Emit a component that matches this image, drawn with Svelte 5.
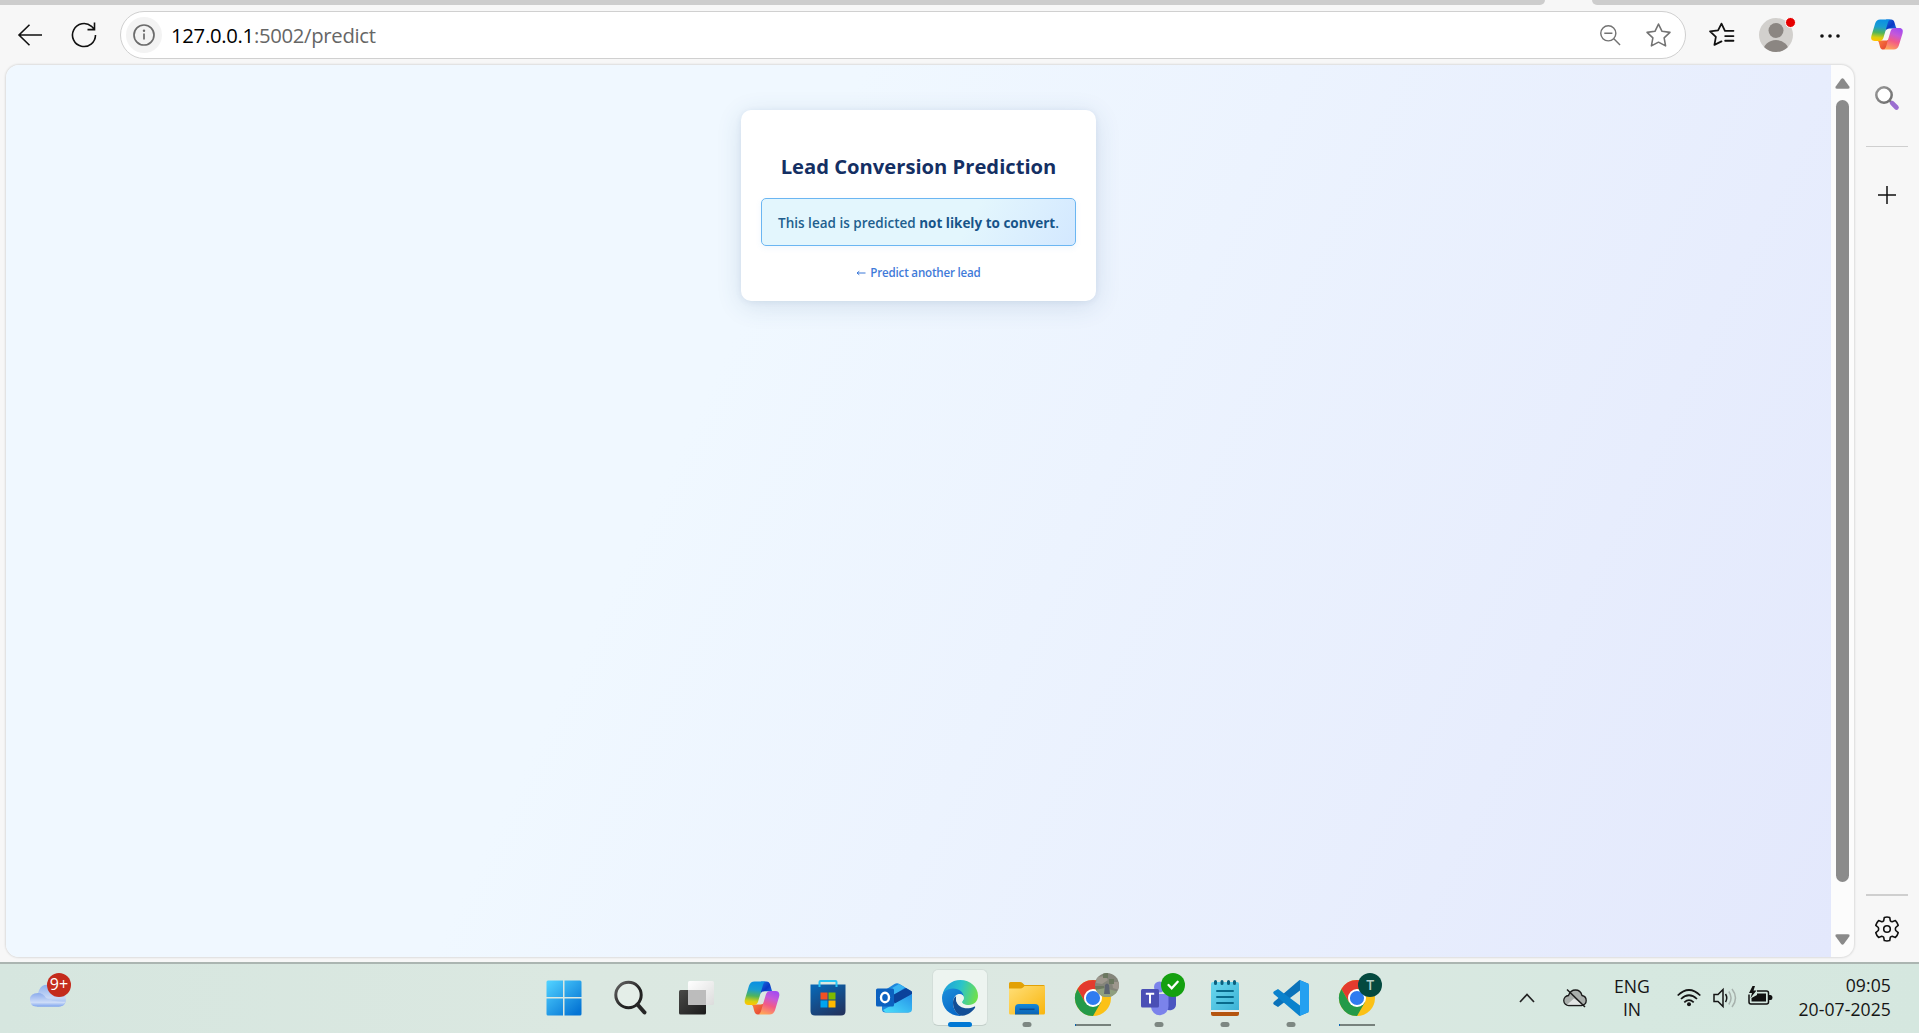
<script>
  const apps = [
    { id: 'start' },
    { id: 'search' },
    { id: 'tasks' },
    { id: 'copilot' },
    { id: 'store' },
    { id: 'outlook' },
    { id: 'edge', mark: 'active' },
    { id: 'files', mark: 'dot' },
    { id: 'chrome', mark: 'line', badge: 'photo' },
    { id: 'teams', mark: 'dot', badge: 'check' },
    { id: 'notepad', mark: 'dot' },
    { id: 'code', mark: 'dot' },
    { id: 'chrome', mark: 'line', badge: 'letter' }
  ];
</script>

{#snippet copilot(k)}
  <svg class="copilot" viewBox="0 0 36 34">
    <defs>
      <linearGradient id="ca{k}" x1=".5" y1="0" x2=".4" y2="1">
        <stop offset="0" stop-color="#0a8fe4" /><stop offset=".35" stop-color="#1b9ed0" />
        <stop offset=".62" stop-color="#4fb45c" /><stop offset=".85" stop-color="#d8cf10" /><stop offset="1" stop-color="#ffc400" />
      </linearGradient>
      <linearGradient id="cb{k}" x1=".7" y1="0" x2=".35" y2="1">
        <stop offset="0" stop-color="#a44cf0" /><stop offset=".3" stop-color="#c659d8" />
        <stop offset=".6" stop-color="#f25a87" /><stop offset="1" stop-color="#ffa458" />
      </linearGradient>
      <linearGradient id="cc{k}" x1="0" y1="0" x2="1" y2="1">
        <stop offset="0" stop-color="#1a6fe0" /><stop offset=".5" stop-color="#0a38c4" /><stop offset="1" stop-color="#1b7de6" />
      </linearGradient>
      <linearGradient id="cd{k}" x1="0" y1="0" x2="1" y2="1">
        <stop offset="0" stop-color="#ff8a3c" /><stop offset="1" stop-color="#e03a35" />
      </linearGradient>
    </defs>
    <path fill="url(#cc{k})" d="M17 .5h5.500c2 0 3 1.200 3.600 3l1.600 5.400c.3 1 .9 1.400 1.800 1.400h-8.500c-2.500 0-4 1-4.700 3z" />
    <path fill="url(#cd{k})" d="M8 23.500h8.500c2 0 3-.8 3.600-2.500L18 30c-.6 2-2 3.500-4 3.500-2.200 0-3.200-1.300-3.700-3.200l-1.200-4.500c-.3-1-.9-2-2.100-2.300z" />
    <path fill="url(#ca{k})" d="M10.500.5h12c-2 0-3 1.700-3.600 3.700l-4.700 16c-.8 2.500-2 3.800-4.500 3.800H4.500C1 24 0 21.500 1 18L5 4.800C5.900 2 7.800.5 10.500.5z" />
    <path fill="url(#cb{k})" d="M25.500 33.500h-12c2 0 3-1.700 3.600-3.700l4.700-16c.8-2.500 2-3.800 4.500-3.800h5.200c3.500 0 4.500 2.500 3.500 6l-4 13.200c-.9 2.800-2.800 4.300-5.500 4.300z" />
  </svg>
{/snippet}

{#snippet chrome()}
  <svg viewBox="0 0 36 36">
    <circle cx="18" cy="18" r="18" fill="#fbc116" />
    <path fill="#e33b2e" d="M2.410 9A18 18 0 0 1 33.590 9H18L10.200 22.500z" />
    <path fill="#249a48" d="M2.410 9A18 18 0 0 0 18 36L25.800 22.500 18 18l-7.800 4.500z" />
    <circle cx="18" cy="18" r="9" fill="#fff" />
    <circle cx="18" cy="18" r="7.100" fill="#2f7cf0" />
  </svg>
{/snippet}

{#snippet appIcon(id)}
  {#if id === 'start'}
    <svg viewBox="0 0 36 36">
      <defs><linearGradient id="win" gradientUnits="userSpaceOnUse" x1="2" y1="2" x2="30" y2="34"><stop offset="0" stop-color="#4fd0ff" /><stop offset="1" stop-color="#0474d4" /></linearGradient></defs>
      <path fill="url(#win)" d="M2 .5h15v16.500H.5V2Q.5.500 2 .5zM18.500.5H34q1.500 0 1.500 1.500v15h-17zM.5 18.500H17v17H2Q.5 35.500.5 34zM18.500 18.500h17V34q0 1.500-1.500 1.500H18.500z" />
    </svg>
  {:else if id === 'search'}
    <svg viewBox="0 0 36 36">
      <defs><linearGradient id="sg" x1="0" y1="0" x2="1" y2="1"><stop offset="0" stop-color="#666" /><stop offset=".6" stop-color="#222" /></linearGradient></defs>
      <circle cx="16.500" cy="15" r="12.700" fill="#fff" fill-opacity=".25" stroke="url(#sg)" stroke-width="3" />
      <path d="M25.500 24.500l7 8" stroke="#262626" stroke-width="4" stroke-linecap="round" />
    </svg>
  {:else if id === 'tasks'}
    <svg viewBox="0 0 36 36">
      <defs>
        <linearGradient id="tk" x1="0" y1="0" x2="1" y2="1"><stop offset="0" stop-color="#4a4a48" /><stop offset="1" stop-color="#1b1b1b" /></linearGradient>
        <linearGradient id="tw" x1="0" y1="0" x2="1" y2="1"><stop offset="0" stop-color="#fff" /><stop offset="1" stop-color="#dcdcdc" /></linearGradient>
      </defs>
      <rect x="1" y="10" width="27" height="24.500" rx="1.500" fill="url(#tk)" />
      <rect x="10" y="1" width="26" height="24" rx="1.500" fill="url(#tw)" />
      <path d="M10 10h18v15H11.500Q10 25 10 23.500z" fill="#bcbcbc" />
    </svg>
  {:else if id === 'copilot'}
    {@render copilot('task')}
  {:else if id === 'store'}
    <svg viewBox="0 0 36 36">
      <defs><linearGradient id="st" x1=".2" y1="0" x2=".8" y2="1"><stop offset="0" stop-color="#0866b4" /><stop offset="1" stop-color="#22335f" /></linearGradient></defs>
      <path d="M.5 4.500h35V31q0 4.500-4.500 4.500H5Q.5 35.500.5 31z" fill="url(#st)" />
      <path d="M9.500 7V2Q9.500 1 10.500 1h15q1 0 1 1v5" fill="none" stroke="#28c4f5" stroke-width="2" />
      <path d="M10.500 12.500h7v7h-7z" fill="#f25022" /><path d="M18.500 12.500h7v7h-7z" fill="#7fba00" />
      <path d="M10.500 20.500h7v7h-7z" fill="#00a4ef" /><path d="M18.500 20.500h7v7h-7z" fill="#ffb900" />
    </svg>
  {:else if id === 'outlook'}
    <svg viewBox="0 0 36 36">
      <defs><linearGradient id="ol" x1="0" y1="1" x2="1" y2="0"><stop offset="0" stop-color="#4be0fb" /><stop offset="1" stop-color="#2590e8" /></linearGradient></defs>
      <path d="M6 12L18.500 4Q21 2.500 23.500 4L35 11v18q0 3.500-3.500 3.500H9.500q-3.500 0-3.500-3.500z" fill="#1c86dc" />
      <path d="M11 11L23 4l6 3.500L14 18z" fill="#39b3f2" />
      <path d="M15 16L30 8l6 3.500v3L19 24z" fill="#0b429b" />
      <path d="M7 30L36 14v15q0 3.500-3.500 3.500H9.500z" fill="url(#ol)" />
      <rect x="0" y="8.500" width="18" height="18" rx="1.500" fill="#0c61c0" />
      <ellipse cx="9" cy="17.500" rx="4" ry="4.700" fill="none" stroke="#fff" stroke-width="2.400" />
    </svg>
  {:else if id === 'edge'}
    <svg viewBox="0 0 36 36">
      <defs>
        <linearGradient id="e1" x1="0" y1=".3" x2="1" y2=".5"><stop offset="0" stop-color="#1f9fdc" /><stop offset=".5" stop-color="#2bc4c9" /><stop offset="1" stop-color="#6fe04c" /></linearGradient>
        <linearGradient id="e2" x1="0" y1="0" x2=".6" y2="1"><stop offset="0" stop-color="#1c8edb" /><stop offset="1" stop-color="#0667c6" /></linearGradient>
      </defs>
      <path fill="url(#e1)" d="M.4 15.500C2 6 9.500 0 18.300 0 28.500 0 36 7.300 36 15.700c0 5.300-4 9.300-9.300 9.300-4.200 0-6.700-1.500-6.700-3 0-1 1.700-1.700 1.700-4.300 0-4-3.700-7.700-9.700-7.700C6.500 10 2 12.500.4 15.500z" />
      <path fill="url(#e2)" d="M0 18C0 12 5 8.500 11 8.500c6.500 0 10.700 4 10.700 8.500-1-2-2.500-3-4.500-3-3.400 0-6.200 4-6.200 9 0 6 3.500 11 9 12.800C8.500 37 0 28.500 0 18z" />
      <path fill="#124e96" d="M14.200 16C11.500 18 11 20 11 23c0 7 5 12.500 9.500 12.800C26 35 30.500 31.500 33 27.700c.5-.9-.2-1.400-1-.9C24 30.500 15.500 27 14.200 21c-.3-2-.2-3.500 0-5z" />
      <path fill="#edf4f0" d="M14.200 17.500c.8-2.200 2-3.300 3.600-3.300 2.400 0 4 1.700 4 3.800 0 2-1.800 3-1.800 4.200 0 1.700 2.700 3.100 7 3-5.800 2-12-.5-12.800-5.200z" />
    </svg>
  {:else if id === 'files'}
    <svg viewBox="0 0 36 36">
      <defs>
        <linearGradient id="fg" x1="0" y1="0" x2="1" y2="1"><stop offset="0" stop-color="#ffdf78" /><stop offset="1" stop-color="#f9b50d" /></linearGradient>
        <linearGradient id="fb" x1="0" y1="0" x2="0" y2="1"><stop offset="0" stop-color="#1488d8" /><stop offset="1" stop-color="#0b62b4" /></linearGradient>
      </defs>
      <path d="M0 3.500Q0 2 1.500 2H11q1.500 0 2.500 1l2 2H34.500Q36 5 36 6.500V20H0z" fill="#e2a106" />
      <path d="M0 8.500h11.500q1.500 0 2.500-1L15.500 6H36v27q0 1.500-1.500 1.500h-33Q0 34.500 0 33z" fill="url(#fg)" />
      <path d="M6 34.500V28q0-4 4-4h16q4 0 4 4v6.500z" fill="url(#fb)" />
      <path d="M10.500 29.300h15" stroke="#0a4b93" stroke-width="1.500" />
    </svg>
  {:else if id === 'chrome'}
    {@render chrome()}
  {:else if id === 'teams'}
    <svg viewBox="0 0 36 36">
      <circle cx="31" cy="11" r="4" fill="#4b53bc" /><circle cx="18.500" cy="7" r="5.500" fill="#7b83eb" />
      <path d="M24 14h11v10.500a6 6 0 0 1-11 3z" fill="#4b55c0" />
      <path d="M10 14h17.500v12a8.500 8.500 0 0 1-17.500 1z" fill="#7b83eb" />
      <rect x="0" y="9" width="18" height="18.500" rx="1.500" fill="#4a4fb5" />
      <path d="M4.800 13.800h8.400M9 13.800V23.500" stroke="#fff" stroke-width="2" />
    </svg>
  {:else if id === 'notepad'}
    <svg viewBox="0 0 36 36">
      <defs><linearGradient id="np" x1="0" y1="0" x2="1" y2="1"><stop offset="0" stop-color="#6bd8ef" /><stop offset="1" stop-color="#3cb2d6" /></linearGradient></defs>
      <path d="M4 29h28v5q0 2-2 2H6q-2 0-2-2z" fill="#b4540f" /><path d="M4 29h28v3H4z" fill="#efe9e4" />
      <path d="M6 2h24q2 0 2 2v26H4V4q0-2 2-2z" fill="url(#np)" />
      <path d="M8.500 1.500v2M15 1.500v2M21.500 1.500v2M27.500 1.500v2" stroke="#0b5f7e" stroke-width="3" stroke-linecap="round" />
      <path d="M10 11h16M10 17h16M10 23h16" stroke="#086a8c" stroke-width="2" stroke-linecap="round" />
    </svg>
  {:else if id === 'code'}
    <svg viewBox="0 0 36 36">
      <path d="M26.500 0L36 4 27 10.500 5 27 .8 24.500q-1.300-1.300 0-2.600z" fill="#0b72ba" />
      <path d="M26.500 36L36 32 27 25.500 5 9 .8 11.500q-1.300 1.300 0 2.600z" fill="#0b82cd" />
      <path d="M26.500 0L34.700 3.500Q36 4 36 5.500v25q0 1.500-1.300 2L26.500 36q.5-.5.500-2V2q0-1.500-.5-2z" fill="#25a0f0" />
    </svg>
  {/if}
{/snippet}

<div class="screen">
  <div class="tabs"><i class="tab-left"></i><i class="tab-right"></i></div>

  <header class="toolbar">
    <svg class="back" viewBox="0 0 24 22"><path d="M24 11H1M11.500 .8L1 11l10.500 10.200" /></svg>
    <svg class="reload" viewBox="0 0 26 26"><path d="M24.500 13A11.500 11.500 0 1 1 20.500 4.300L23.500 7.500M23.500 .5V7.600H16.500" /></svg>
    <div class="address">
      <span class="info"><svg viewBox="0 0 22 22"><circle cx="11" cy="11" r="10" /><path d="M11 9.500V15.500" /><circle class="pt" cx="11" cy="6.800" r="1.200" /></svg></span>
      <span class="url"><b>127.0.0.1</b>:5002/predict</span>
      <svg class="zoom" viewBox="0 0 22 22"><circle cx="8.700" cy="8.700" r="7.900" /><path d="M4.500 8.700h8.500M14.500 14.500L21 21" /></svg>
      <svg class="star" viewBox="0 0 24 24"><path d="M12 1l3.400 7 7.600 1-5.600 5.300L18.800 22 12 18.400 5.200 22l1.400-7.700L1 9l7.600-1z" /></svg>
    </div>
    <svg class="favs" viewBox="0 0 24 24"><path d="M23.500 8.500H15.300L12 1.500 8.700 8 1 9l5.600 5.300L5.200 22l6.800-3.400M15.500 13.500h8M15.500 18h8" /></svg>
    <div class="profile">
      <svg viewBox="0 0 34 34"><defs><clipPath id="pc"><circle cx="17" cy="17" r="17" /></clipPath></defs><circle cx="17" cy="17" r="17" fill="#d2d0cd" /><g clip-path="url(#pc)" fill="#8b8682"><circle cx="17" cy="12.500" r="7.500" /><ellipse cx="17" cy="34" rx="13" ry="12" /></g></svg>
      <i></i>
    </div>
    <svg class="more" viewBox="0 0 20 4"><circle cx="2" cy="2" r="1.800" /><circle cx="10" cy="2" r="1.800" /><circle cx="18" cy="2" r="1.800" /></svg>
    <div class="bar-copilot">{@render copilot('bar')}</div>
  </header>

  <div class="middle">
    <div class="frame">
      <main class="page">
        <section class="card">
          <h1>Lead Conversion Prediction</h1>
          <p class="result"><span class="lead">This lead is predicted</span> <strong>not likely to convert</strong>.</p>
          <a class="again" href="#again"><svg viewBox="0 0 10 6"><path d="M9.500 3H1M3.300 1.200L1 3l2.300 1.800" /></svg>Predict another lead</a>
        </section>
      </main>
      <div class="scroll">
        <svg viewBox="0 0 15 11"><path d="M6 1.200Q7.500-.8 9 1.200L14.300 8.500Q15.200 10.700 13 10.800H2Q-.2 10.700.7 8.500z" /></svg>
        <i></i>
        <svg class="down" viewBox="0 0 15 11"><path d="M6 1.200Q7.500-.8 9 1.200L14.300 8.500Q15.200 10.700 13 10.800H2Q-.2 10.700.7 8.500z" /></svg>
      </div>
    </div>
    <aside class="side">
      <svg class="find" viewBox="0 0 24 24"><defs><linearGradient id="fd" x1="0" y1="0" x2="1" y2="1"><stop offset="0" stop-color="#9b9b9b" /><stop offset="1" stop-color="#6a6a6a" /></linearGradient></defs><circle cx="9" cy="9" r="7.700" fill="#fff" stroke="url(#fd)" stroke-width="2.500" /><path d="M14 14l3 3" stroke="#777" stroke-width="2.500" /><path d="M17.200 17.200l4.300 4.300" stroke="#9b6fd0" stroke-width="4.600" stroke-linecap="round" /></svg>
      <i class="rule"></i>
      <svg class="plus" viewBox="0 0 18 18"><path d="M9 0v18M0 9h18" /></svg>
      <i class="rule bottom"></i>
      <svg class="gear" viewBox="0 0 26 26"><path d="M10.300 1.400Q13 .6 15.700 1.400L16.300 4.700Q17 5.600 18.200 5.700L21.400 4.600Q23.500 6.600 24.200 9.300L21.700 11.500Q21 13 21.700 14.500L24.200 16.700Q23.500 19.400 21.400 21.400L18.200 20.300Q17 20.400 16.300 21.300L15.700 24.600Q13 25.400 10.300 24.600L9.700 21.300Q9 20.400 7.800 20.300L4.600 21.400Q2.500 19.400 1.800 16.700L4.300 14.500Q5 13 4.300 11.500L1.800 9.300Q2.500 6.600 4.600 4.600L7.800 5.700Q9 5.600 9.700 4.700z" /><circle cx="13" cy="13" r="3.300" /></svg>
    </aside>
  </div>

  <footer class="taskbar">
    <div class="weather">
      <svg viewBox="0 0 36 23"><defs><linearGradient id="cl" x1="0" y1="0" x2="0" y2="1"><stop offset="0" stop-color="#8fb2ee" /><stop offset=".6" stop-color="#c9d9f6" /><stop offset="1" stop-color="#86aaf0" /></linearGradient><linearGradient id="cl2" x1="0" y1="0" x2="0" y2="1"><stop offset="0" stop-color="#8cacec" /><stop offset=".7" stop-color="#cddcf8" /><stop offset="1" stop-color="#80a5ee" /></linearGradient></defs><path d="M7 22.500Q6 .8 17 .8q7 0 9 7 10 0 10 7.500t-8 7.200z" fill="url(#cl)" /><path d="M6 22.500Q0 22 0 15.500T8 9q5 0 8 5 6 4 19.500 3.500-2 5-6.500 5z" fill="url(#cl2)" /></svg>
      <span>9+</span>
    </div>
    <nav class="apps">
      {#each apps as app}
        <div class="app {app.mark ?? ''}">
          <div class="icon">
            {@render appIcon(app.id)}
            {#if app.badge === 'photo'}
              <svg class="badge" viewBox="0 0 24 24"><defs><clipPath id="ph"><circle cx="12" cy="12" r="12" /></clipPath></defs><g clip-path="url(#ph)"><path fill="#84857a" d="M0 0h24v24H0z" /><path fill="#9d978d" d="M2 4l8-1 3 4-6 4-6-1zM17 9h7v8l-6-2z" /><path fill="#6b7860" d="M8 0h5v5H8zM14 6h5v5h-5zM0 13h9v4H0z" /><path fill="#8f9f7f" d="M0 17l10-2 14 4v5H0z" /><path fill="#5d6470" d="M10 12q2-3 4 0l1 9H9z" /></g></svg>
            {:else if app.badge === 'check'}
              <svg class="badge" viewBox="0 0 24 24"><circle cx="12" cy="12" r="12" fill="#14a010" /><path d="M7.500 12l3.200 3.300 6-6.500" fill="none" stroke="#fff" stroke-width="2.300" stroke-linecap="round" /></svg>
            {:else if app.badge === 'letter'}
              <span class="badge letter">T</span>
            {/if}
          </div>
          {#if app.mark}<i class="mark"></i>{/if}
        </div>
      {/each}
    </nav>
    <div class="tray">
      <svg class="chev" viewBox="0 0 16 10"><path d="M1 9l7-7.500L15 9" /></svg>
      <svg class="cloud" viewBox="0 0 24 20"><path d="M6 17.500a5 5 0 0 1-.5-10Q7.500 2 12.500 2q5 0 6.500 5.500 4.200.8 4.200 5t-4.700 5z" fill="#a9aeab" stroke="#1a1a1a" stroke-width="1.300" /><path d="M4 16.800L11 10.500l9 6.300z" fill="#e3e5e4" /><path d="M4 1.500L22 19" stroke="#1a1a1a" stroke-width="1.500" /></svg>
      <div class="lang"><span>ENG</span><span>IN</span></div>
      <svg class="wifi" viewBox="0 0 24 18"><path d="M.7 6.500Q12-4.500 23.300 6.500M4 10Q12 2.500 20 10M7.300 13.300Q12 9 16.700 13.300" /><circle cx="12" cy="15.300" r="2" /></svg>
      <svg class="sound" viewBox="0 0 24 20"><path d="M1 6.500h4L10 1.500v17L5 13.500H1zM12.500 6q2.500 4 0 8" /><path class="faint" d="M15.800 3.500q4.500 6.500 0 13M19 1q7 9 0 18" /></svg>
      <svg class="battery" viewBox="0 0 25 20"><path d="M9 5H18.500Q20.500 5 20.500 7v9q0 2-2 2H3Q1 18 1 16V8.500" fill="none" stroke="#111" stroke-width="1.500" /><path d="M9 7.500h9v8H3.500V12L9 9z" fill="#111" /><path d="M21 9h1.500q2 0 2 2.500t-2 2.500H21zM4.500 0L1 7h3L2.500 12 8.500 4.500H5.500L7 0z" fill="#111" /></svg>
      <div class="clock"><span>09:05</span><span>20-07-2025</span></div>
    </div>
  </footer>
</div>

<style>
  :global(body) { margin: 0; overflow: hidden; }
  svg { display: block; overflow: visible; flex: none; }
  i { display: block; }
  .screen {
    width: 1919px; height: 1033px; display: flex; flex-direction: column; overflow: hidden;
    background: #f7f7f7; font-family: "Segoe UI", "Open Sans", "Noto Sans", sans-serif;
  }
  .tabs { height: 5px; display: flex; flex: none; }
  .tab-left { width: 1545px; background: #cdcdcd; border-radius: 0 0 8px 0; margin-right: 47px; }
  .tab-right { flex: 1; background: #cdcdcd; border-radius: 0 0 0 8px; }

  .toolbar { height: 59px; flex: none; display: flex; align-items: center; box-sizing: border-box; padding: 0 15px 0 18px; }
  .toolbar path, .toolbar circle { fill: none; }
  .back { width: 24px; height: 22px; stroke: #111; stroke-width: 1.6; }
  .reload { width: 26px; height: 26px; margin-left: 29px; stroke: #111; stroke-width: 1.6; }
  .address {
    width: 1566px; height: 48px; box-sizing: border-box; margin: 1px 0 0 23px; display: flex; align-items: center;
    background: #fff; border: 1.500px solid #d0d0d0; border-radius: 24px; padding: 0 14px 0 5px;
  }
  .info { width: 36px; height: 36px; border-radius: 50%; background: #f3f3f3; display: grid; place-items: center; }
  .info svg { width: 22px; height: 22px; stroke: #6b6b6b; stroke-width: 1.700; }
  .info .pt { fill: #6b6b6b; stroke: none; }
  .url { flex: 1; margin-left: 9px; font-size: 20.300px; line-height: 30px; letter-spacing: -.3px; color: #666; }
  .url b { font-weight: 400; color: #000; }
  .zoom { width: 21px; height: 21px; margin-right: 25px; stroke: #737373; stroke-width: 1.500; }
  .star { width: 25px; height: 25px; stroke: #737373; stroke-width: 1.500; stroke-linejoin: round; }
  .favs { width: 25px; height: 25px; margin-left: 23px; stroke: #111; stroke-width: 1.700; stroke-linejoin: round; stroke-linecap: round; }
  .profile { position: relative; width: 34px; height: 34px; margin-left: 25px; }
  .profile svg { width: 34px; height: 34px; }
  .profile svg > circle { fill: #d2d0cd; }
  .profile g circle, .profile g ellipse { fill: #8b8682; }
  .profile i { position: absolute; width: 9px; height: 9px; right: -3px; top: -1px; border-radius: 50%; background: #e60000; border: 1px solid #fff; }
  .more { width: 20px; height: 4px; margin: 2px 0 0 27px; }
  .more circle { fill: #111; }
  .bar-copilot { margin-left: auto; width: 34px; }
  .bar-copilot svg { width: 34px; height: 31px; }
  .bar-copilot :global(path:nth-of-type(1)) { fill: url(#ccbar); }
  .bar-copilot :global(path:nth-of-type(2)) { fill: url(#cdbar); }
  .bar-copilot :global(path:nth-of-type(3)) { fill: url(#cabar); }
  .bar-copilot :global(path:nth-of-type(4)) { fill: url(#cbbar); }

  .middle { flex: 1; display: flex; padding: 1px 0 5px 6px; min-height: 0; }
  .frame { width: 1848px; display: flex; border-radius: 13px; overflow: hidden; box-shadow: 0 0 2px 1px rgba(0,0,0,.11); background: #fcfcfc; }
  .page {
    width: 1825px; display: flex; justify-content: center; align-items: flex-start; box-sizing: border-box; padding-top: 45px;
    background: linear-gradient(116deg, #f0f8ff 38%, #e3e8fc 100%);
  }
  .card {
    width: 355px; height: 191px; box-sizing: border-box; padding: 41px 20px 0; border-radius: 10px; background: #fff;
    box-shadow: 0 5px 26px rgba(44,82,130,.14), 0 1px 6px rgba(44,82,130,.08);
    display: flex; flex-direction: column; align-items: center;
  }
  h1 { margin: 0; font-size: 20.200px; line-height: 30px; font-weight: 700; color: #142f63; white-space: nowrap; }
  .result {
    width: 315px; height: 48px; box-sizing: border-box; margin: 17px 0 0; border: 1px solid #6bb6f2; border-radius: 5px;
    background: linear-gradient(120deg, #e3f6fd 65%, #d3e8ff 100%); box-shadow: 0 2px 6px rgba(66,153,225,.08);
    text-align: center; font-size: 13.500px; line-height: 48px; font-weight: 600; color: #215e8e; white-space: nowrap;
  }
  strong { font-weight: 700; color: #175489; }
  .again { display: flex; align-items: center; margin-top: 17px; font-size: 11.600px; letter-spacing: -.2px; line-height: 20px; font-weight: 600; color: #3f7bd9; text-decoration: none; }
  .again svg { width: 10px; height: 6px; margin-right: 4px; fill: none; stroke: #3b78d8; stroke-width: 1; }
  .scroll { flex: 1; display: flex; flex-direction: column; align-items: center; padding: 13px 0 12px; }
  .scroll svg { width: 15px; height: 11px; fill: #8a8a8a; }
  .scroll i { width: 13px; height: 782px; border-radius: 7px; background: #8b8b8b; margin: 11px 0 auto; }
  .scroll .down { transform: rotate(180deg); }

  .side { flex: 1; display: flex; flex-direction: column; align-items: center; }
  .find { width: 24px; height: 24px; margin-top: 21px; }
  .rule { width: 42px; height: 1px; background: #cfcfcf; margin-top: 36px; }
  .plus { width: 18px; height: 18px; margin-top: 39px; stroke: #111; stroke-width: 1.500; }
  .rule.bottom { height: 2px; margin-top: auto; }
  .gear { width: 26px; height: 26px; margin: 20px 0 15px; fill: none; stroke: #111; stroke-width: 1.600; stroke-linejoin: round; }

  .taskbar {
    position: relative; height: 71px; flex: none; box-sizing: border-box; border-top: 2px solid #abb5b1; display: flex; align-items: center;
    background: linear-gradient(90deg, #d6e6df, #dbe8e1 30%, #dce8e2 60%, #d6e8e0 85%, #d5e7df);
  }
  .weather { position: relative; width: 36px; margin-left: 30px; }
  .weather svg { width: 36px; height: 23px; margin-top: -6px; }
  .weather span { position: absolute; left: 17px; top: -17px; width: 24px; height: 24px; border-radius: 50%; background: #c42b1c; color: #fff; font-size: 16px; line-height: 23px; text-align: center; }
  .apps { display: flex; margin-left: 464.500px; }
  .app { position: relative; width: 66.150px; height: 69px; display: grid; place-items: center; }
  .icon { position: relative; width: 36px; height: 36px; z-index: 1; margin-top: -1px; }
  .icon svg { width: 36px; height: 36px; }
  .icon .badge { position: absolute; width: 24px; height: 24px; left: 20px; top: -7px; }
  .icon .letter { border-radius: 50%; background: #04493f; color: #b5cfc8; font-size: 14px; font-weight: 600; line-height: 24px; text-align: center; left: 19px; }
  .active::before { content: ""; position: absolute; left: 5px; top: 5px; width: 56px; height: 57px; box-sizing: border-box; border: 1px solid #d3ded9; border-bottom-color: #c3cfca; border-radius: 6px; background: #edf4f0; }
  .mark { position: absolute; bottom: 6px; left: 50%; transform: translateX(-50%); height: 5px; border-radius: 3px; background: #7d8782; }
  .dot .mark { width: 9px; }
  .active .mark { width: 24px; background: #0078d4; z-index: 1; }
  .line .mark { width: 36px; height: 2px; bottom: 7px; border-radius: 0; background: linear-gradient(90deg, #0b64b0 1px, #77817c 1px); }

  .tray { margin-left: auto; padding: 0 28px 2px 0; display: flex; align-items: center; font-size: 17.600px; color: #151515; }
  .tray span { display: block; }
  .chev { width: 16px; height: 10px; fill: none; stroke: #222; stroke-width: 1.700; }
  .cloud { width: 24px; height: 20px; margin-left: 28px; }
  .lang { width: 60px; margin-left: 15px; text-align: center; line-height: 23px; }
  .wifi { width: 24px; height: 18px; margin-left: 15px; fill: none; stroke: #151515; stroke-width: 1.700; }
  .wifi circle { fill: #151515; stroke: none; }
  .sound { width: 24px; height: 20px; margin-left: 12px; fill: none; stroke: #151515; stroke-width: 1.500; }
  .sound .faint { stroke: #a7b2ad; }
  .battery { width: 25px; height: 20px; margin: -3px 0 0 11px; }
  .clock { width: 118px; text-align: right; line-height: 24px; margin-top: -1px; letter-spacing: .08px; }
</style>
